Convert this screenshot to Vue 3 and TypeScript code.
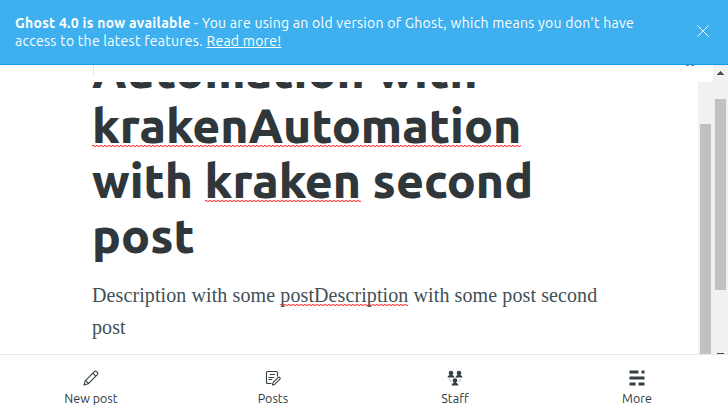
<script setup lang="ts">
interface NavItem {
  label: string
  icon: 'pen' | 'posts' | 'staff' | 'more'
}

const navItems: NavItem[] = [
  { label: 'New post', icon: 'pen' },
  { label: 'Posts', icon: 'posts' },
  { label: 'Staff', icon: 'staff' },
  { label: 'More', icon: 'more' },
]
</script>

<template>
  <div class="app">
    <aside class="alert">
      <p class="alert-text">
        <b>Ghost 4.0 is now available</b> - You are using an old version of Ghost, which means you don't have<br />access to the latest features. <a class="alert-link">Read more!</a>
      </p>
      <svg class="alert-close" viewBox="0 0 12 12" width="12" height="12">
        <path d="M0.3 0.3 11.7 11.7M11.7 0.3 0.3 11.7" />
      </svg>
    </aside>

    <div class="workspace">
      <div class="main">
        <header class="toolbar">
          <span class="toolbar-divider"></span>
          <span class="toolbar-dots"><i></i><i></i></span>
        </header>
        <div class="editor">
          <article class="content">
            <h1 class="title">
              <span>Automation with</span>
              <span><u class="typo">krakenAutomation</u></span>
              <span>with <u class="typo">kraken</u> second</span>
              <span>post</span>
            </h1>
            <p class="body-text">
              Description with some <u class="typo">postDescription</u> with some post second<br />post
            </p>
          </article>
          <div class="scroll inner"><div class="thumb"></div></div>
        </div>
      </div>
      <div class="scroll outer">
        <svg class="arrow" viewBox="0 0 7 4" width="7" height="4" shape-rendering="crispEdges">
          <path d="M3 0h1v1h1v1h1v1h1v1H0V3h1V2h1V1h1z" />
        </svg>
        <div class="thumb"></div>
        <div class="arrow-down"></div>
      </div>
    </div>

    <nav class="nav">
      <a v-for="item in navItems" :key="item.label" class="nav-item">
        <svg v-if="item.icon === 'pen'" class="icon" viewBox="0 0 16 16">
          <g class="line">
            <path d="M1 15 2.2 10.8 11.3 1.7Q12.3.7 13.5 1.6L14.4 2.5Q15.3 3.7 14.3 4.7L5.2 13.8Z" />
            <path d="M2.2 10.8Q4.2 10.4 3.9 12.2Q5.5 12 5.2 13.8M9.8 3.2 12.8 6.2" />
          </g>
        </svg>
        <svg v-else-if="item.icon === 'posts'" class="icon" viewBox="0 0 16 16">
          <g class="line">
            <path d="M12.5 6.5V2.5Q12.5 1.5 11.5 1.5H2.5Q1.5 1.5 1.5 2.5V12.5Q1.5 13.5 2.5 13.5H6.5" />
            <path d="M4.8 4.5H10M3.5 7.5H9.3M3.5 9.5H7.2" />
            <path d="M7.5 15 8.2 12.4 13.2 7.4Q14.1 6.8 14.8 7.6T14.9 9.2L9.9 14.2Z" />
          </g>
        </svg>
        <svg v-else-if="item.icon === 'staff'" class="icon" viewBox="0 0 16 16">
          <g class="solid">
            <circle cx="4" cy="3" r="2.3" />
            <path d="M.5 7.6Q.5 5.4 3 5V4H5V5Q7.5 5.4 7.5 7.6Z" />
            <circle cx="12" cy="3" r="2.3" />
            <path d="M8.5 7.6Q8.5 5.4 11 5V4H13V5Q15.5 5.4 15.5 7.6Z" />
            <circle cx="8" cy="10.6" r="2.3" />
            <path d="M4.5 15.6Q4.5 13.2 7 12.8V12H9V12.8Q11.5 13.2 11.5 15.6Z" />
          </g>
          <path class="thin" d="M2.3 9Q2.8 11 4.6 12M13.7 9Q13.2 11 11.4 12" />
        </svg>
        <svg v-else class="icon" viewBox="0 0 16 16">
          <path class="solid" d="M.5.5H9.5V3.5H.5ZM12.5.5H15.5V3.5H12.5ZM.5 6.5H15.5V9.5H.5ZM.5 12.5H6.5V15.5H.5ZM9.5 12.5H15.5V15.5H9.5Z" />
        </svg>
        <span>{{ item.label }}</span>
      </a>
    </nav>
  </div>
</template>

<style>
body {
  margin: 0;
  overflow: hidden;
}
</style>

<style scoped>
.app {
  display: flex;
  flex-direction: column;
  width: 728px;
  height: 418px;
  overflow: hidden;
  background: #fff;
  color: #2f373b;
  font-family: Ubuntu, "Open Sans", "Noto Sans", sans-serif;
}
.alert {
  display: flex;
  flex: none;
  box-sizing: border-box;
  height: 65px;
  padding: 14px 19px 0 15px;
  justify-content: space-between;
  border-bottom: 1px solid #1499e8;
  background: #3eb0ef;
  color: #fff;
}
.alert-text {
  margin: 0;
  font-size: 14px;
  line-height: 18px;
  letter-spacing: 0.275px;
  white-space: nowrap;
}
.alert-link {
  text-decoration: underline;
}
.alert-close {
  flex: none;
  margin-top: 11px;
  fill: none;
  stroke: #fff;
  stroke-width: 0.9;
}
.workspace {
  display: flex;
  flex: none;
  height: 289px;
}
.main {
  display: flex;
  flex: 1;
  flex-direction: column;
}
.toolbar {
  display: flex;
  flex: none;
  height: 17px;
  padding: 0 19px 0 93px;
  justify-content: space-between;
}
.toolbar-divider {
  width: 1px;
  height: 10px;
  background: #dfe9f1;
}
.toolbar-dots {
  display: flex;
  gap: 2px;
}
.toolbar-dots i {
  width: 3px;
  height: 1px;
  background: #688da7;
}
.editor {
  display: flex;
  flex: none;
  height: 272px;
  overflow: hidden;
}
.content {
  flex: 1;
  padding-left: 92px;
}
.title {
  margin: -39px 0 0;
  font-size: 48px;
  font-weight: 800;
  line-height: 55px;
  white-space: nowrap;
}
.title span {
  display: block;
}
.body-text {
  margin: 16px 0 0;
  color: #415056;
  font-family: "Liberation Serif", serif;
  font-size: 20px;
  line-height: 32px;
  letter-spacing: 0.1px;
  white-space: nowrap;
}
.typo {
  --gap: 5px;
  text-decoration: none;
  background-image:
    linear-gradient(90deg, #ff4a4a 2px, #ffd0d0 2px),
    linear-gradient(90deg, #ffd0d0 2px, #ff4a4a 2px);
  background-repeat: repeat-x;
  background-position: 0 calc(100% - var(--gap) - 1px), 0 calc(100% - var(--gap));
  background-size: 4px 1px;
}
.body-text .typo {
  --gap: 0px;
}
.scroll {
  display: flex;
  flex: none;
  flex-direction: column;
  align-items: center;
  width: 15px;
  background: #f1f1f1;
}
.thumb {
  width: 11px;
  background: #c1c1c1;
}
.inner .thumb {
  height: 230px;
  margin-top: 42px;
}
.arrow {
  margin-top: 6px;
  fill: #505050;
}
.outer .thumb {
  height: 191px;
  margin-top: 24px;
}
.arrow-down {
  width: 7px;
  height: 1px;
  margin-top: 63px;
  background: #505050;
}
.nav {
  display: grid;
  flex: none;
  grid-template-columns: repeat(4, 1fr);
  box-sizing: border-box;
  height: 64px;
  border-top: 1px solid #dfe9f1;
  background: #fff;
}
.nav-item {
  display: flex;
  flex-direction: column;
  align-items: center;
  padding-top: 15px;
  font-size: 12.5px;
  line-height: 16px;
}
.icon {
  width: 16px;
  height: 16px;
  margin-bottom: 4px;
}
.line {
  fill: none;
  stroke: #343f44;
  stroke-width: 1.1;
  stroke-linejoin: round;
}
.solid {
  fill: #343f44;
}
.thin {
  fill: none;
  stroke: #8b9498;
  stroke-width: 0.7;
}
</style>
